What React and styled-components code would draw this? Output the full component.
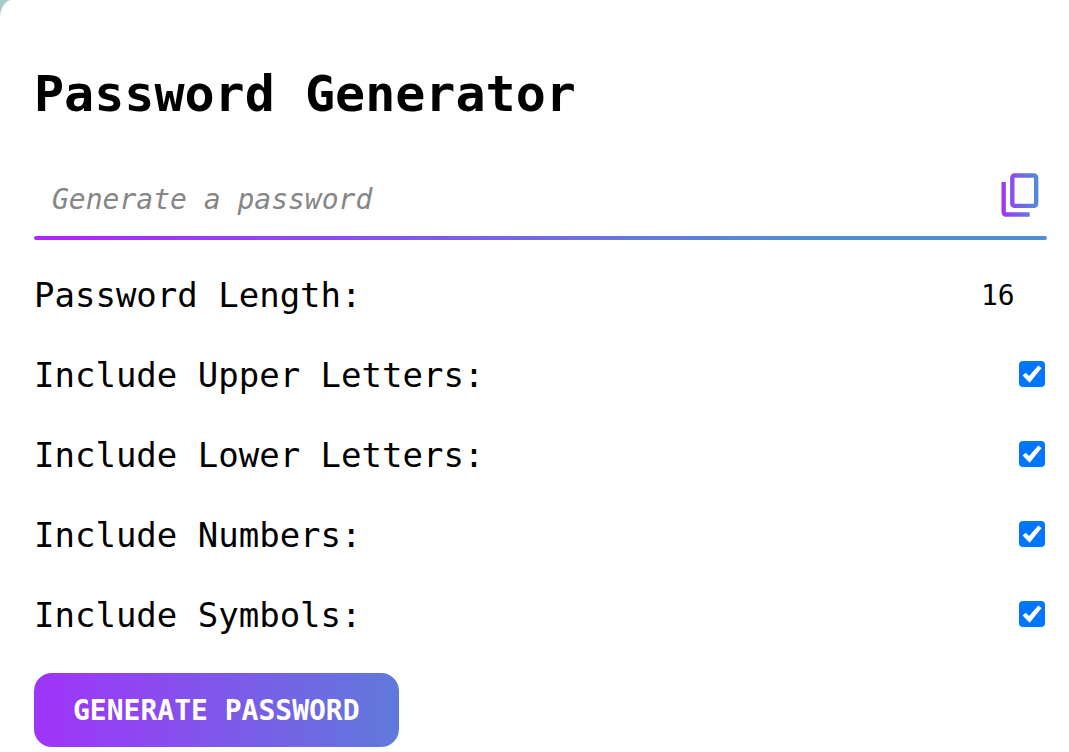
import React, { useState } from "react";
import styled, { createGlobalStyle } from "styled-components";

const GlobalStyle = createGlobalStyle`
  *, *::before, *::after { box-sizing: border-box; }
  body {
    margin: 0;
    background: #a7cdc8;
    color: #000;
    font-family: Consolas, "DejaVu Sans Mono", monospace;
  }
`;

const Card = styled.main`
  display: flex;
  flex-direction: column;
  align-items: stretch;
  min-height: 100vh;
  padding: 64px 22px 4px 34px;
  background: #fff;
  border-top-left-radius: 12px 18px;
`;

const Title = styled.h1`
  margin: 0 0 36px;
  font-size: 50px;
  line-height: 60px;
  font-weight: 700;
`;

const Display = styled.div`
  display: flex;
  align-items: flex-start;
  height: 76px;
`;

const PasswordField = styled.input`
  flex: 1;
  min-width: 0;
  height: 76px;
  padding: 2px 18px 0;
  border: 0;
  outline: 0;
  background: transparent;
  font-family: inherit;
  font-size: 28px;
  color: #000;

  &::placeholder {
    color: #868686;
    font-style: italic;
    opacity: 1;
  }
`;

const CopyButton = styled.button`
  display: flex;
  margin-top: 9px;
  padding: 0;
  border: 0;
  background: transparent;
  cursor: pointer;
`;

const Rule = styled.hr`
  width: 100%;
  height: 4px;
  margin: 0 0 16px;
  border: 0;
  border-radius: 2px;
  background: linear-gradient(90deg, #b421ff, #508ed4 75%);
`;

const Option = styled.div`
  display: flex;
  align-items: center;
  justify-content: space-between;
  height: 80px;
  padding-bottom: 2px;
`;

const OptionLabel = styled.label`
  font-size: 34px;
  line-height: 40px;
`;

const LengthField = styled.input`
  width: 66px;
  height: 40px;
  padding: 0;
  border: 0;
  outline: 0;
  background: transparent;
  font-family: inherit;
  font-size: 28px;
  color: #000;
  appearance: textfield;

  &::-webkit-inner-spin-button,
  &::-webkit-outer-spin-button {
    appearance: none;
    margin: 0;
  }
`;

const Check = styled.input`
  appearance: none;
  width: 26px;
  height: 26px;
  margin: 0 2px 2px 0;
  border: 2px solid #767676;
  border-radius: 4px;
  background: #fff;

  &:checked {
    border: 0;
    background: #0075ff;
  }

  &:checked::before {
    content: "";
    display: block;
    width: 26px;
    height: 26px;
    background: #fff;
    clip-path: polygon(14% 56%, 26% 45%, 39% 58%, 74% 17%, 87% 27%, 41% 84%);
  }
`;

const GenerateButton = styled.button`
  align-self: flex-start;
  height: 74px;
  margin-top: 17px;
  padding: 0 39px;
  border: 0;
  border-radius: 18px;
  background: linear-gradient(90deg, #a033f9, #5f7adb);
  color: #fff;
  font-family: inherit;
  font-size: 28px;
  font-weight: 700;
  text-transform: uppercase;
  cursor: pointer;
`;

const CopyIcon = () => (
  <svg width="52" height="52" viewBox="0 0 24 24" aria-hidden="true">
    <defs>
      <linearGradient id="copy-gradient" gradientUnits="userSpaceOnUse" x1="3" y1="0" x2="20" y2="0">
        <stop offset="0" stopColor="#a033f9" />
        <stop offset="1" stopColor="#508ed4" />
      </linearGradient>
    </defs>
    <path
      fill="url(#copy-gradient)"
      d="M9 18q-.825 0-1.413-.587T7 16V4q0-.825.587-1.413T9 2h9q.825 0 1.413.587T20 4v12q0 .825-.587 1.413T18 18H9Zm0-2h9V4H9v12Zm-4 6q-.825 0-1.413-.587T3 20V6h2v14h11v2H5Z"
    />
  </svg>
);

const charsets = [
  { id: "upper", label: "Include Upper Letters:", chars: "ABCDEFGHIJKLMNOPQRSTUVWXYZ" },
  { id: "lower", label: "Include Lower Letters:", chars: "abcdefghijklmnopqrstuvwxyz" },
  { id: "numbers", label: "Include Numbers:", chars: "0123456789" },
  { id: "symbols", label: "Include Symbols:", chars: "!@#$%^&*()_+-=[]{}" },
];

export default function App() {
  const [password, setPassword] = useState("");
  const [length, setLength] = useState(16);
  const [enabled, setEnabled] = useState({ upper: true, lower: true, numbers: true, symbols: true });

  const generate = () => {
    const pool = charsets.filter((set) => enabled[set.id]).map((set) => set.chars).join("");
    if (!pool) return setPassword("");
    const values = crypto.getRandomValues(new Uint32Array(Number(length) || 0));
    setPassword(Array.from(values, (value) => pool[value % pool.length]).join(""));
  };

  return (
    <>
      <GlobalStyle />
      <Card>
        <Title>Password Generator</Title>
        <Display>
          <PasswordField readOnly value={password} placeholder="Generate a password" aria-label="Password" />
          <CopyButton type="button" aria-label="Copy password" onClick={() => navigator.clipboard?.writeText(password)}>
            <CopyIcon />
          </CopyButton>
        </Display>
        <Rule />
        <Option>
          <OptionLabel htmlFor="length">Password Length:</OptionLabel>
          <LengthField
            id="length"
            type="number"
            min="4"
            max="20"
            value={length}
            onChange={(event) => setLength(event.target.value)}
          />
        </Option>
        {charsets.map((set) => (
          <Option key={set.id}>
            <OptionLabel htmlFor={set.id}>{set.label}</OptionLabel>
            <Check
              id={set.id}
              type="checkbox"
              checked={enabled[set.id]}
              onChange={(event) => setEnabled({ ...enabled, [set.id]: event.target.checked })}
            />
          </Option>
        ))}
        <GenerateButton type="button" onClick={generate}>Generate Password</GenerateButton>
      </Card>
    </>
  );
}
